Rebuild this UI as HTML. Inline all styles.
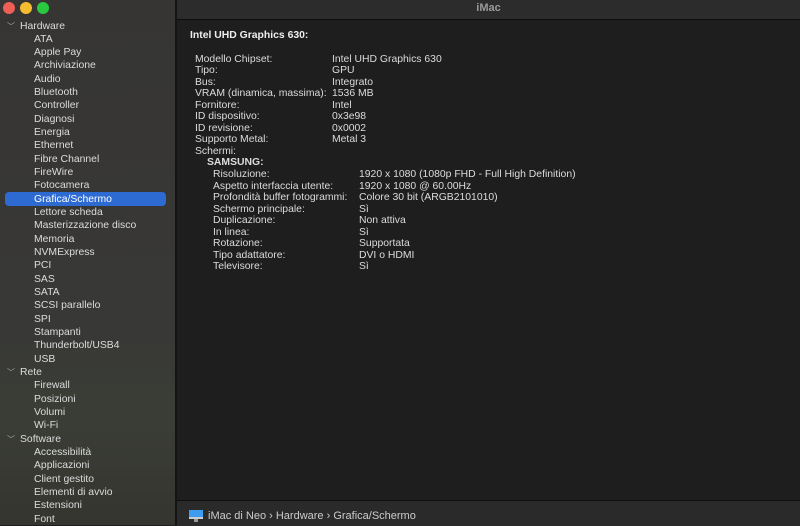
<!DOCTYPE html><html><head><style>
body{margin:0;width:800px;height:525px;overflow:hidden;background:#1e1e1e;font-family:"Liberation Sans",sans-serif;font-size:10.4px;color:#dcdcdc;position:relative}
#sb{position:absolute;left:0;top:0;width:175px;height:525px;background:linear-gradient(#363534,#383836 60%,#3a3d36 80%,#35352f);border-right:2px solid #141414}
.dot{position:absolute;top:2px;width:12px;height:12px;border-radius:50%}
.it{position:absolute;left:34px;line-height:13px;white-space:nowrap}
.hd{position:absolute;left:20px;line-height:13px}
.ch{position:absolute;left:7px;font-size:8px;color:#aaa;line-height:13px}
#sel{position:absolute;left:5px;top:192px;width:161px;height:14px;background:#2d6bd3;border-radius:4px}
#tb{position:absolute;left:177px;top:0;right:0;height:19px;background:#2c2c2c;border-bottom:1px solid #0e0e0e;text-align:center;font-weight:bold;color:#9a9a9a;font-size:11px;line-height:16px}
#bb{position:absolute;left:177px;top:500px;right:0;height:25px;background:#2a2a2a;border-top:1px solid #101010;font-size:11px;color:#ccc}
.r{position:absolute;white-space:nowrap;line-height:12px}
</style></head><body>
<div id="sb">
<div class="dot" style="left:3px;background:#ee5f56"></div>
<div class="dot" style="left:20px;background:#f5bc2f"></div>
<div class="dot" style="left:37px;background:#28c840"></div>
<div id="sel"></div>
<div id="items"></div>
</div>
<div id="tb">iMac</div>
<div id="content"></div>
<div id="bb"><svg style="position:absolute;left:12px;top:9px" width="14" height="13"><rect x="0" y="0" width="14" height="9" fill="#3d9bf0"/><rect x="0" y="7" width="14" height="2" fill="#ccc"/><rect x="5" y="9" width="4" height="3" fill="#999"/></svg><span style="position:absolute;left:31px;top:9px;line-height:13px">iMac di Neo › Hardware › Grafica/Schermo</span></div>
<script>
var L=[["h","Hardware"],"ATA","Apple Pay","Archiviazione","Audio","Bluetooth","Controller","Diagnosi","Energia","Ethernet","Fibre Channel","FireWire","Fotocamera","Grafica/Schermo","Lettore scheda","Masterizzazione disco","Memoria","NVMExpress","PCI","SAS","SATA","SCSI parallelo","SPI","Stampanti","Thunderbolt/USB4","USB",["h","Rete"],"Firewall","Posizioni","Volumi","Wi-Fi",["h","Software"],"Accessibilità","Applicazioni","Client gestito","Elementi di avvio","Estensioni","Font"];
var h="";L.forEach(function(x,i){var y=19.5+i*13.33;if(Array.isArray(x)){h+='<div class="ch" style="top:'+y+'px">﹀</div><div class="hd" style="top:'+y+'px">'+x[1]+'</div>'}else h+='<div class="it" style="top:'+y+'px'+(x=="Grafica/Schermo"?';color:#fff':'')+'">'+x+'</div>'});
document.getElementById('items').innerHTML=h;
var C=[[195,332,"Modello Chipset:","Intel UHD Graphics 630"],[195,332,"Tipo:","GPU"],[195,332,"Bus:","Integrato"],[195,332,"VRAM (dinamica, massima):","1536 MB"],[195,332,"Fornitore:","Intel"],[195,332,"ID dispositivo:","0x3e98"],[195,332,"ID revisione:","0x0002"],[195,332,"Supporto Metal:","Metal 3"],[195,0,"Schermi:",""],[207,0,"<b>SAMSUNG:</b>",""],[213,359,"Risoluzione:","1920 x 1080 (1080p FHD - Full High Definition)"],[213,359,"Aspetto interfaccia utente:","1920 x 1080 @ 60.00Hz"],[213,359,"Profondità buffer fotogrammi:","Colore 30 bit (ARGB2101010)"],[213,359,"Schermo principale:","Sì"],[213,359,"Duplicazione:","Non attiva"],[213,359,"In linea:","Sì"],[213,359,"Rotazione:","Supportata"],[213,359,"Tipo adattatore:","DVI o HDMI"],[213,359,"Televisore:","Sì"]];
var c='<div class="r" style="left:190px;top:30px;font-weight:bold;color:#eee">Intel UHD Graphics 630:</div>';
C.forEach(function(r,i){var y=53.5+i*11.55;c+='<div class="r" style="left:'+r[0]+'px;top:'+y+'px">'+r[2]+'</div>';if(r[1])c+='<div class="r" style="left:'+r[1]+'px;top:'+y+'px">'+r[3]+'</div>'});
document.getElementById('content').innerHTML=c;
</script>
</body></html>
